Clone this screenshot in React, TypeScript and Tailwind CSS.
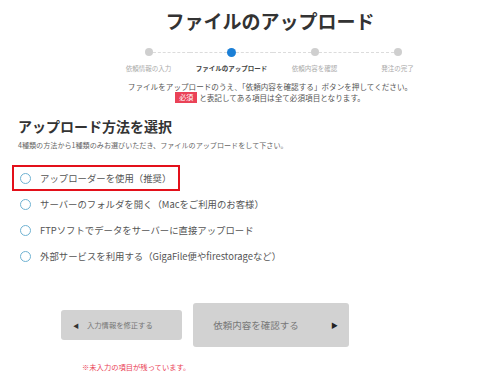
const steps = [
  { label: '依頼情報の入力', active: false },
  { label: 'ファイルのアップロード', active: true },
  { label: '依頼内容を確認', active: false },
  { label: '発注の完了', active: false },
];

const options = [
  'アップローダーを使用（推奨）',
  'サーバーのフォルダを開く（Macをご利用のお客様）',
  'FTPソフトでデータをサーバーに直接アップロード',
  '外部サービスを利用する（GigaFile便やfirestorageなど）',
];

const font = { fontFamily: '"Noto Sans CJK JP", "Noto Sans", sans-serif' };

export default function App() {
  return (
    <div className="w-[500px] h-[376px] bg-white text-[#444] overflow-hidden" style={font}>
      {/* Header */}
      <div className="pl-[40px] text-center">
        <h1 className="pt-[7px] text-[19px] leading-[28px] font-bold text-[#333]">
          ファイルのアップロード
        </h1>

        {/* Stepper */}
        <div className="mt-[12px] flex justify-center pl-[6px]">
          {steps.map((s, i) => (
            <div key={s.label} className="w-[83px] flex flex-col items-center">
              <div className="w-full flex items-center h-[10px]">
                <div className={`flex-1 border-t border-dashed ${i === 0 ? 'border-transparent' : 'border-[#dcdcdc]'}`} />
                <div className={`rounded-full ${s.active ? 'w-[9px] h-[9px] bg-[#1b7fd6]' : 'w-[8px] h-[8px] bg-[#cfcfcf]'}`} />
                <div className={`flex-1 border-t border-dashed ${i === steps.length - 1 ? 'border-transparent' : 'border-[#dcdcdc]'}`} />
              </div>
              <div className={`mt-[7px] text-[6.5px] leading-[9px] whitespace-nowrap ${s.active ? 'font-bold text-[#444]' : 'text-[#aaa]'}`}>
                {s.label}
              </div>
            </div>
          ))}
        </div>

        {/* Notes */}
        <p className="mt-[8px] text-[7.6px] leading-[11px] text-[#555]">
          ファイルをアップロードのうえ、「依頼内容を確認する」ボタンを押してください。
        </p>
        <p className="flex items-center justify-center text-[7.6px] leading-[11px] text-[#555]">
          <span className="inline-block bg-[#ea4257] text-white px-[4px] mr-[2px] leading-[11px] text-[7px]">必須</span>
          と表記してある項目は全て必須項目となります。
        </p>
      </div>

      {/* Upload method */}
      <div className="pl-[18px] mt-[14px]">
        <h2 className="text-[14px] leading-[18px] font-bold text-[#333]">アップロード方法を選択</h2>
        <p className="mt-[5px] text-[7.1px] leading-[10px] text-[#666]">
          4種類の方法から1種類のみお選びいただき、ファイルのアップロードをして下さい。
        </p>
      </div>

      <div className="mt-[15px] pl-[12px] flex flex-col">
        {options.map((o, i) => (
          <div
            key={o}
            className={`flex items-center h-[26px] pl-[6px] ${i === 0 ? 'w-[168px] border-2 border-[#e3101a]' : 'border-2 border-transparent'}`}
          >
            <span className="w-[11px] h-[11px] rounded-full border border-[#6fb2d2] bg-white shrink-0" />
            <span className="ml-[9px] text-[9.4px] leading-[12px] text-[#555] whitespace-nowrap">{o}</span>
          </div>
        ))}
      </div>

      {/* Buttons */}
      <div className="mt-[34px] pl-[61px] flex items-center gap-[11px]">
        <button className="w-[121px] h-[30px] rounded-[3px] bg-[#d2d2d2] flex items-center pl-[12px] text-[7.3px] text-[#777]">
          <span className="text-[6px] text-[#333] mr-[8px]">◀</span>
          入力情報を修正する
        </button>
        <button className="relative w-[156px] h-[44px] rounded-[3px] bg-[#d2d2d2] flex items-center justify-center text-[9.5px] text-[#777] pr-[30px]">
          依頼内容を確認する
          <span className="absolute right-[11px] top-1/2 -translate-y-1/2 text-[7px] text-[#222]">▶</span>
        </button>
      </div>

      <p className="mt-[15px] pl-[82px] text-[7.3px] leading-[10px] text-[#ea4257]">※未入力の項目が残っています。</p>
    </div>
  );
}
